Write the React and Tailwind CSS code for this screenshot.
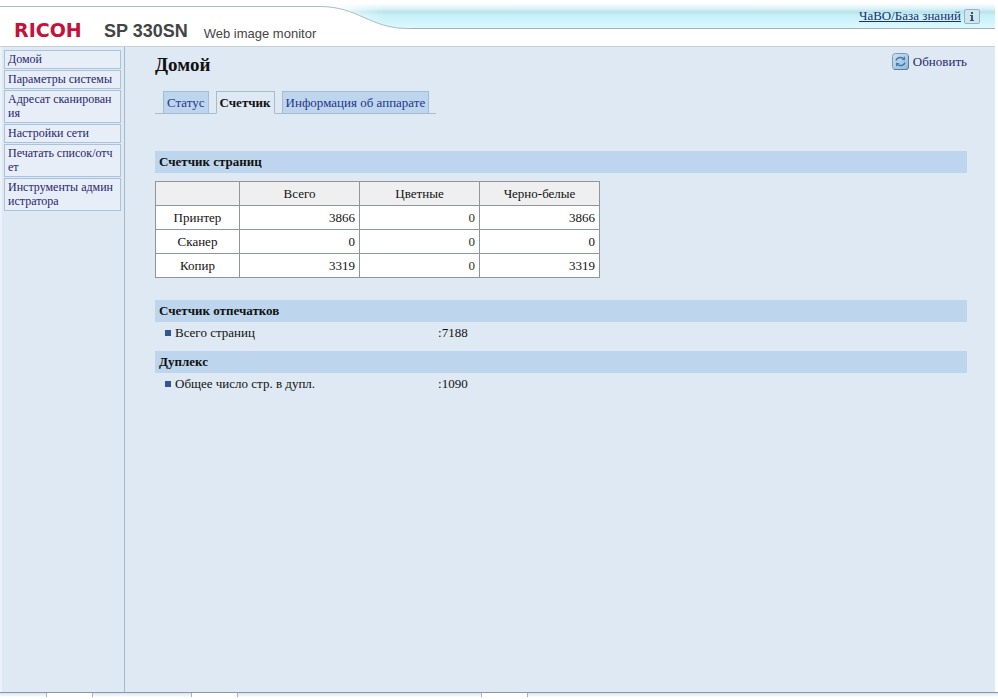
const menuItems = [
  'Домой',
  'Параметры системы',
  'Адресат сканирования',
  'Настройки сети',
  'Печатать список/отчет',
  'Инструменты администратора',
];

const tabs = [
  { label: 'Статус', active: false },
  { label: 'Счетчик', active: true },
  { label: 'Информация об аппарате', active: false },
];

const counterRows = [
  { name: 'Принтер', total: 3866, color: 0, mono: 3866 },
  { name: 'Сканер', total: 0, color: 0, mono: 0 },
  { name: 'Копир', total: 3319, color: 0, mono: 3319 },
];

const HeaderBackground = () => (
  <div className="absolute inset-x-0 top-0 flex h-[30px] pr-[3px]">
    <svg width="410" height="30" viewBox="0 0 410 30" fill="none" className="shrink-0" aria-hidden="true">
      <defs>
        <linearGradient id="sky" x1="0" y1="0" x2="0" y2="30" gradientUnits="userSpaceOnUse">
          <stop offset="0.1" stopColor="#ffffff" />
          <stop offset="0.3" stopColor="#d9f1f6" />
          <stop offset="0.4" stopColor="#b9e1ea" />
          <stop offset="0.5" stopColor="#c5f1f9" />
          <stop offset="0.9" stopColor="#dcf7fd" />
        </linearGradient>
        <linearGradient id="skyFade" x1="325" y1="0" x2="385" y2="0" gradientUnits="userSpaceOnUse">
          <stop offset="0" stopColor="#ffffff" />
          <stop offset="1" stopColor="#ffffff" stopOpacity="0" />
        </linearGradient>
      </defs>
      <path d="M310 0H410V28.5H408C370 28.5 358 6.5 320 6.5H310Z" fill="url(#sky)" />
      <path d="M310 0H385V28H375C355 20 345 6 310 6Z" fill="url(#skyFade)" />
      <path d="M0 6.5H320C358 6.5 370 28.5 408 28.5H410" stroke="#a9bcbf" />
    </svg>
    <div className="h-[29px] flex-1 border-b border-[#a0b4b8] bg-[linear-gradient(to_bottom,#ffffff_3px,#d9f1f6_9px,#b9e1ea_12px,#c5f1f9_15px,#dcf7fd_27px)]" />
  </div>
);

const Header = () => (
  <header className="relative h-[46px] bg-white">
    <HeaderBackground />
    <div className="relative flex h-full items-start justify-between pr-[18px] pl-[14px]">
      <div className="flex items-end pt-[17px] font-['Liberation_Sans',Arial,sans-serif] text-[#444]">
        <span className="w-[90px] font-['DejaVu_Sans',sans-serif] text-[19px] leading-[26px] font-bold text-[#c4123a]">RICOH</span>
        <h1 className="text-[18px] leading-6 font-bold">SP 330SN</h1>
        <span className="pl-4 text-[13px] leading-[18px]">Web image monitor</span>
      </div>
      <div className="flex items-center gap-[3px] pt-2">
        <a href="#faq" className="text-[13px] leading-4 text-[#1c2f6e] underline">ЧаВО/База знаний</a>
        <button type="button" aria-label="Справка" className="flex h-[15px] w-4 items-center justify-center rounded-[2px] border border-[#93b5c0] bg-[#cfe6ee]">
          <svg width="6" height="9" viewBox="0 0 6 9" fill="#34566f" aria-hidden="true">
            <rect x="2" y="0" width="2" height="2" />
            <path d="M1 3H4V8H5V9H1V8H2V4H1Z" />
          </svg>
        </button>
      </div>
    </div>
  </header>
);

const SideMenu = () => (
  <nav className="w-[125px] shrink-0 border-r border-l-2 border-r-[#a9b7cb] border-l-[#edf2fa] pt-[3px] pr-[3px] pl-[2px] text-[12px]">
    <ul className="flex flex-col gap-px">
      {menuItems.map((item) => (
        <li key={item}>
          <a href="#menu" className="block border border-[#aac3dc] bg-[#e8eef7] px-[3px] pt-px pb-[2px] leading-[14px] break-all text-[#26266e]">
            {item}
          </a>
        </li>
      ))}
    </ul>
  </nav>
);

const RefreshButton = () => (
  <button type="button" className="flex items-center gap-1 text-[#26266e]">
    <svg width="17" height="17" viewBox="0 0 17 17" fill="none" aria-hidden="true">
      <defs>
        <linearGradient id="refreshFace" x1="0" y1="0" x2="1" y2="1">
          <stop offset="0" stopColor="#cbe2f3" />
          <stop offset="1" stopColor="#93b9d8" />
        </linearGradient>
      </defs>
      <rect x="0.5" y="0.5" width="16" height="16" rx="3" fill="url(#refreshFace)" stroke="#7f9bb2" />
      <path d="M2 16.5H14C15.500 16.500 16.500 15.500 16.500 14V3" stroke="#5d7a94" />
      <path d="M4 7.500C5 4.500 8 3.800 11 5" stroke="#3f79ad" strokeWidth="1.500" />
      <path d="M13 3.200V7.200L9.500 6.800Z" fill="#3f79ad" />
      <path d="M13 9.500C12 12.500 9 13.200 6 12" stroke="#3f79ad" strokeWidth="1.500" />
      <path d="M4 13.800V9.800L7.500 10.200Z" fill="#3f79ad" />
    </svg>
    Обновить
  </button>
);

const SectionTitle = ({ children }) => (
  <h3 className="bg-[#bdd6ee] px-1 py-[3px] leading-4 font-bold">{children}</h3>
);

const CounterLine = ({ label, value }) => (
  <dl className="flex items-center py-[3px] pl-[10px] leading-4">
    <dt className="flex w-[273px] items-center gap-1">
      <span className="size-[6px] bg-[#34568f]" />
      {label}
    </dt>
    <dd>:{value}</dd>
  </dl>
);

const CounterTable = () => (
  <table className="w-[445px] table-fixed border-collapse bg-white">
    <thead>
      <tr className="h-6 bg-[#efefef]">
        <th className="w-[84px] border border-[#8f959c]" aria-label="Функция" />
        <th className="border border-[#8f959c] font-normal">Всего</th>
        <th className="border border-[#8f959c] font-normal">Цветные</th>
        <th className="border border-[#8f959c] font-normal">Черно-белые</th>
      </tr>
    </thead>
    <tbody>
      {counterRows.map(({ name, total, color, mono }) => (
        <tr key={name} className="h-6">
          <th className="border border-[#8f959c] font-normal">{name}</th>
          <td className="border border-[#8f959c] px-1 text-right">{total}</td>
          <td className="border border-[#8f959c] px-1 text-right text-[#1c3a20]">{color}</td>
          <td className="border border-[#8f959c] px-1 text-right">{mono}</td>
        </tr>
      ))}
    </tbody>
  </table>
);

const Footer = () => (
  <footer className="flex h-[7px] border-t border-[#8497ad] bg-linear-to-b from-[#dbe5ef] to-white to-70%">
    <div className="w-[46px]" />
    <div className="h-1 w-[47px] border-x border-[#a9b2bd] bg-white" />
    <div className="w-[98px]" />
    <div className="h-1 w-[47px] border-x border-[#a9b2bd] bg-white" />
    <div className="w-[243px]" />
    <div className="h-1 w-[47px] border-x border-[#a9b2bd] bg-white" />
  </footer>
);

export default function App() {
  return (
    <div className="flex min-h-screen flex-col bg-white font-['Liberation_Serif','Times_New_Roman',serif] text-[13px] leading-4 text-[#111]">
      <Header />
      <div className="mr-[3px] flex flex-1 border-t border-[#c3cfda] bg-[#dfe9f4]">
        <SideMenu />
        <main className="flex-1 pt-[6px] pr-7 pl-[30px]">
          <div className="flex items-start justify-between">
            <h2 className="text-[19px] leading-6 font-bold">Домой</h2>
            <RefreshButton />
          </div>

          <div className="mt-[14px] flex">
            <div className="w-2 border-b border-[#a9bac9]" />
            {tabs.map(({ label, active }) => (
              <div key={label} className="flex">
                <button
                  type="button"
                  className={`h-[23px] border px-[3px] ${
                    active
                      ? 'border-[#a9bac9] border-b-transparent font-bold'
                      : 'border-[#a3bcd5] bg-[#bdd6ee] text-[#26348a]'
                  }`}
                >
                  {label}
                </button>
                <div className="w-[7px] border-b border-[#a9bac9]" />
              </div>
            ))}
          </div>

          <section className="mt-[37px]">
            <SectionTitle>Счетчик страниц</SectionTitle>
            <div className="mt-2">
              <CounterTable />
            </div>
          </section>

          <section className="mt-[22px]">
            <SectionTitle>Счетчик отпечатков</SectionTitle>
            <CounterLine label="Всего страниц" value="7188" />
          </section>

          <section className="mt-[7px]">
            <SectionTitle>Дуплекс</SectionTitle>
            <CounterLine label="Общее число стр. в дупл." value="1090" />
          </section>
        </main>
      </div>
      <Footer />
    </div>
  );
}
